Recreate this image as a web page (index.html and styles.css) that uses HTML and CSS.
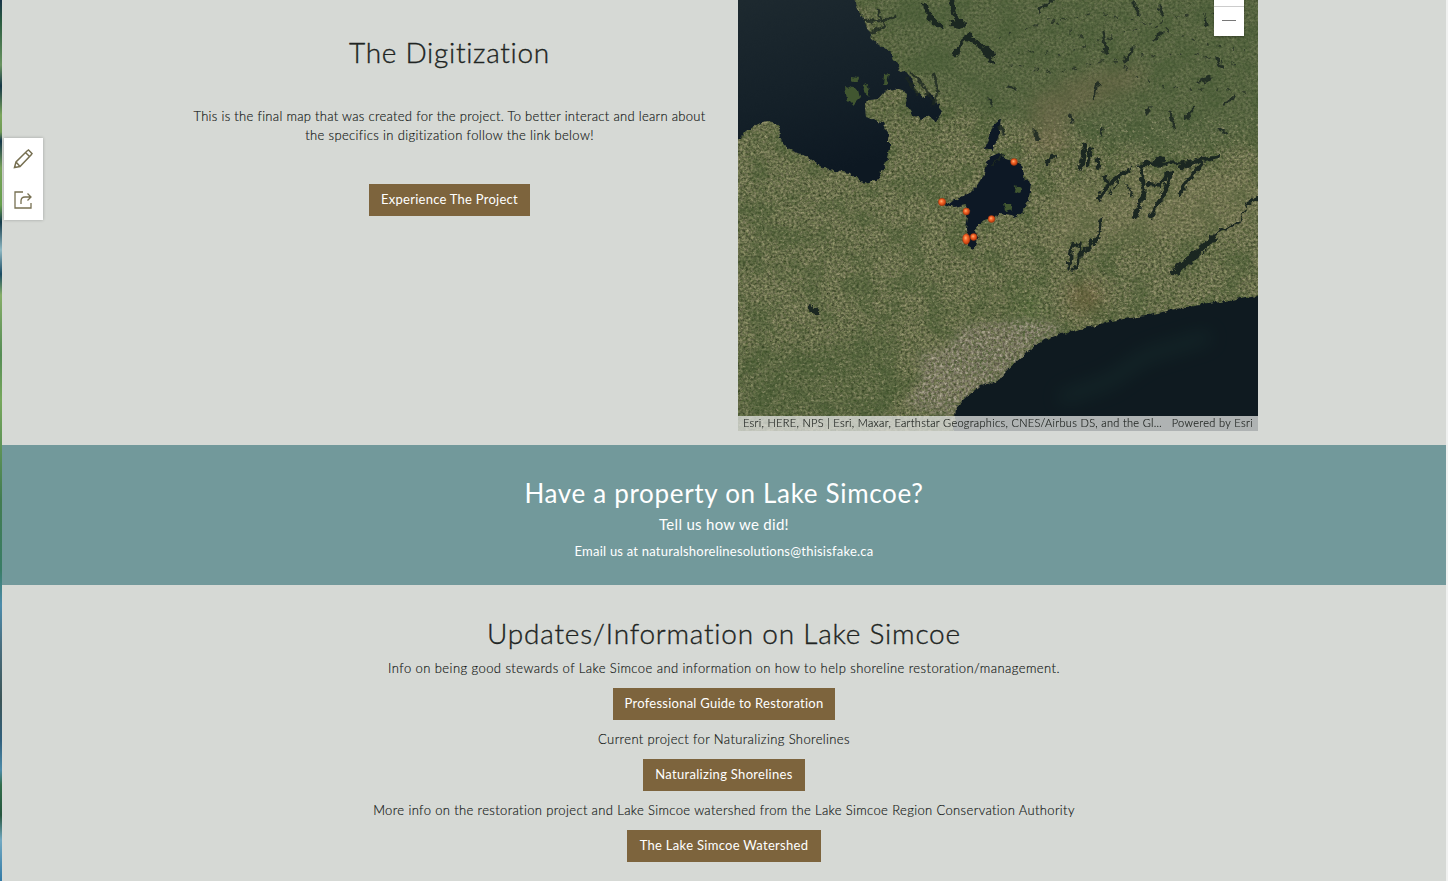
FILE: index.html
```html
<!DOCTYPE html>
<html lang="en">
<head>
<meta charset="utf-8">
<title>Lake Simcoe Natural Shorelines</title>
<link rel="stylesheet" href="styles.css">
</head>
<body>
<div class="page">
  <main class="content">
    <section class="digitization">
      <div class="intro">
        <h1 class="title intro-title">The Digitization</h1>
        <p class="copy intro-copy">This is the final map that was created for the project. To better interact and learn about<br><span class="second-line">the specifics in digitization follow the link below!</span></p>
        <a class="button project">Experience The Project</a>
      </div>
      <div class="map">
        <svg class="imagery" viewBox="738 0 520 431" width="520" height="431">
          <defs>
            <filter id="grain" x="0" y="0" width="100%" height="100%" color-interpolation-filters="sRGB">
              <feTurbulence type="fractalNoise" baseFrequency="0.37 0.41" numOctaves="3" seed="8"/>
              <feColorMatrix values=".5 .14 0 0 .085  .42 .18 0 0 .13  .4 .08 0 0 .05  0 0 0 0 1"/>
              <feGaussianBlur stdDeviation=".3"/>
            </filter>
            <filter id="patches" x="0" y="0" width="100%" height="100%" color-interpolation-filters="sRGB">
              <feTurbulence type="fractalNoise" baseFrequency="0.04" numOctaves="5" seed="21"/>
              <feColorMatrix values="0 0 0 0 .25  0 0 0 0 .34  0 0 0 0 .18  4 0 0 0 -1.75"/>
            </filter>
            <filter id="flecks" x="0" y="0" width="100%" height="100%" color-interpolation-filters="sRGB">
              <feTurbulence type="fractalNoise" baseFrequency="0.28 0.33" numOctaves="3" seed="4"/>
              <feColorMatrix values="0 0 0 0 .72  0 0 0 0 .69  0 0 0 0 .55  0 5 0 0 -3.05"/>
            </filter>
            <filter id="rough" x="-5%" y="-5%" width="110%" height="110%" color-interpolation-filters="sRGB">
              <feTurbulence type="fractalNoise" baseFrequency="0.16" numOctaves="3" seed="3"/>
              <feDisplacementMap in="SourceGraphic" scale="6" xChannelSelector="R" yChannelSelector="G"/>
              <feGaussianBlur stdDeviation=".4"/>
            </filter>
            <filter id="ragged" x="-5%" y="-5%" width="110%" height="110%" color-interpolation-filters="sRGB">
              <feTurbulence type="fractalNoise" baseFrequency="0.16" numOctaves="3" seed="13"/>
              <feDisplacementMap in="SourceGraphic" scale="8" xChannelSelector="R" yChannelSelector="G"/>
              <feGaussianBlur stdDeviation=".45"/>
            </filter>
            <filter id="soft" x="-30%" y="-30%" width="160%" height="160%" color-interpolation-filters="sRGB"><feGaussianBlur stdDeviation="9"/></filter>
            <filter id="city" x="-10%" y="-10%" width="120%" height="120%" color-interpolation-filters="sRGB">
              <feTurbulence type="fractalNoise" baseFrequency="0.35" numOctaves="3" seed="9" result="n"/>
              <feColorMatrix in="n" values=".65 0 0 0 .19  .63 0 0 0 .18  .6 0 0 0 .12  0 3 0 0 -.9" result="c"/>
              <feGaussianBlur in="SourceAlpha" stdDeviation="4" result="a"/>
              <feComposite in="c" in2="a" operator="in"/>
            </filter>
            <radialGradient id="dot" cx="42%" cy="40%" r="62%">
              <stop offset="0" stop-color="#ffb070"/><stop offset=".4" stop-color="#f5662a"/><stop offset="1" stop-color="#b93808"/>
            </radialGradient>
            <linearGradient id="bay" x1="0" y1="0" x2=".3" y2="1">
              <stop offset="0" stop-color="#1e2a30"/><stop offset=".55" stop-color="#152129"/><stop offset="1" stop-color="#0d1822"/>
            </linearGradient>
          </defs>
          <rect x="738" width="520" height="431" fill="#66704a"/>
          <rect x="738" width="520" height="431" filter="url(#grain)"/>
          <rect x="738" width="520" height="431" filter="url(#patches)" opacity=".4"/>
          <g filter="url(#soft)">
            <path d="M860-10H1270V130L1170 155 1040 130 940 100 890 50Z" fill="#485d39" opacity=".48"/>
            <path d="M1030 100 1080 75 1145 65 1140 85 1070 115 1065 160 1030 150Z" fill="#8b6f55" opacity=".28"/>
            <path d="M745 355 895 335 895 420 738 420Z" fill="#3e572e" opacity=".3"/>
            <path d="M1070 285H1100V310H1070Z" fill="#82603e" opacity=".4"/>
            <path d="M1020 290H1040V335H1020Z" fill="#42652c" opacity=".4"/>
            <path d="M1110 175 1258 170V230L1050 250 1050 195Z" fill="#8a855f" opacity=".25"/>
          </g>
          <rect class="field-flecks" x="738" y="118" width="520" height="313" filter="url(#flecks)"/>
          <path filter="url(#city)" d="M905 405 922 378 918 355 945 348 965 326 1000 322 1028 320 1054 324 1064 330 1035 345 1000 380 958 405 952 417Z"/>
          <g filter="url(#rough)">
            <path fill="url(#bay)" d="M730-8H850L860 12 867 27 873 40 887 50 894 59 901 72 911 74 915 90 923 97 930 93 938 103 942 112 936 121 929 115 921 119 912 114 906 106 907 94 899 88 885 91 878 99 869 100 865 106 866 117 884 124 889 136 889 150 885 165 879 177 869 184 858 180 850 173 835 171 820 166 808 157 795 152 785 146 780 138 779 124 766 122 757 124 747 131 736 142Z"/>
            <path fill="#0d1825" d="M986 162 992 156 999 153 1006 158 1013 161 1021 164 1024 180 1031 183 1029 199 1024 211 1015 217 1000 214 990 219 979 224 974 230 978 240 974 249 968 247 966 229 969 211 965 205 954 207 943 204 953 201 967 195 978 184 984 174ZM993 126 1001 119 998 138 992 151 986 148Z"/>
            <path fill="#0f1a20" d="M953 440 956 407 969 394 980 386 997 381 1006 371 1024 355 1040 342 1060 334 1089 327 1110 321 1145 316 1180 308 1215 303 1268 293V440Z"/>
          </g>
          <g filter="url(#rough)" fill="#415630">
            <path d="M845 85 852 88 859 89 861 97 853 105 847 99ZM852 76 859 77 857 83 851 81ZM865 85 870 89 867 95 863 92ZM884 75 889 74 887 83 883 85Z"/>
            <path d="M1015 186 1022 188 1019 193 1014 191ZM1004 203 1010 203 1013 210 1006 212Z"/>
          </g>
          <path filter="url(#soft)" fill="none" stroke="#1d3d38" stroke-width="12" opacity=".35" d="M1060 399 1110 381 1145 356 1210 336"/>
          <g filter="url(#ragged)" fill="none" stroke="#1b2721" stroke-linecap="round" stroke-linejoin="round">
            <path stroke-width="4.500" d="M925 4 931 19 940 27M951 0 954 15 963 26 952 23M955 54 962 41 971 35M971 40 981 46 992 62M984 48 993 55"/>
            <path opacity=".8" stroke-width="3" d="M866 20 881 22 894 17M872 32 885 27 879 12M910 72 919 80 926 91 934 100M934 75 938 91 933 105M908 79 917 94"/>
            <path opacity=".85" stroke-width="3.200" d="M1040 10 1053-2M1133 2 1140 15M1159 5 1163 15M1205 18 1207 27M1103 32 1106 52M1124 62 1133 48M1154 42 1161 33M1217 59 1222 68M1200 82 1210 78M1098 84 1094 99M1008 86 1015 90M1071 116 1073 120M1146 115 1150 108M1171 112 1174 128M1186 118 1194 108M1218 128 1226 133M1224 104 1234 97M1102 128 1101 136M989 98 991 104M1001 127 1003 133M1035 132 1038 139"/>
            <path stroke-width="4.200" d="M1085 145 1081 168M1091 149 1087 165M1098 159 1098 167M1047 163 1054 155M1098 199 1108 185 1129 169M1106 177 1107 190M1135 217 1144 195 1140 165 1164 159M1144 164 1188 163 1219 157M1171 173 1165 192 1150 216M1148 184 1160 185 1167 173M1203 163 1191 176 1180 193M1192 164 1181 168M1248 203 1257 199"/>
            <path stroke-width="1.400" d="M1240 220 1248 203M1110 195 1121 175M1132 195 1125 182"/>
            <path stroke-width="3.400" d="M1069 269 1072 246 1081 243 1080 257 1074 270M1082 254 1098 237 1102 220"/>
            <path stroke-width="7" d="M1176 271 1192 258 1205 246 1212 238"/>
            <path stroke-width="2" d="M1205 241 1222 230 1239 222M992 165 1002 155"/>
            <path stroke-width="6" d="M812 309 816 312"/>
            <path opacity=".65" stroke-width="1.700" stroke-dasharray="1 9 3 14" d="M1000 38 1040 24 1095 12 1155 26 1200 42 1245 51M1010 64 1055 73 1130 55 1195 54 1240 65M1048 18 1090 42 1140 79 1165 87 1245 92M1020 52 1060 54 1120 34 1180 15 1250 12"/>
          </g>
          <g class="markers">
            <circle cx="1014" cy="162" r="3.400"/><circle cx="942" cy="202" r="3.700"/><circle cx="966.300" cy="211.500" r="3.400"/><circle cx="991.500" cy="219" r="3.400"/><ellipse cx="966.300" cy="239" rx="3.700" ry="5.300"/><circle cx="973.600" cy="237" r="3.400"/>
          </g>
        </svg>
        <div class="zoom-control"><span class="minus"></span></div>
        <div class="attribution"><span class="sources">Esri, HERE, NPS | Esri, Maxar, Earthstar Geographics, CNES/Airbus DS, and the Gl…</span><span class="powered">Powered by Esri</span></div>
      </div>
    </section>
    <section class="contact">
      <h2 class="contact-title">Have a property on Lake Simcoe?</h2>
      <p class="contact-lead">Tell us how we did!</p>
      <p class="contact-mail">Email us at naturalshorelinesolutions@thisisfake.ca</p>
    </section>
    <section class="updates">
      <h2 class="title updates-title">Updates/Information on Lake Simcoe</h2>
      <p class="copy info">Info on being good stewards of Lake Simcoe and information on how to help shoreline restoration/management.</p>
      <a class="button guide">Professional Guide to Restoration</a>
      <p class="copy current">Current project for Naturalizing Shorelines</p>
      <a class="button natural">Naturalizing Shorelines</a>
      <p class="copy more">More info on the restoration project and Lake Simcoe watershed from the Lake Simcoe Region Conservation Authority</p>
      <a class="button watershed">The Lake Simcoe Watershed</a>
    </section>
  </main>
  <aside class="tools">
    <svg class="tool" viewBox="0 0 22 22"><path d="M2.500 19.500 4 14 15 3 16.500 2 20 5.500 19 7 8 18.500ZM4 14 8 18.500M13.500 4.500 18 9"/></svg>
    <svg class="tool share" viewBox="0 0 22 22"><path d="M11 3H3V19H19V14M9 15V12Q9 8 13 8H19M15.500 4.500 19 8 15.500 11.500"/></svg>
  </aside>
</div>
</body>
</html>
```
FILE: styles.css
```css
* { box-sizing: border-box; }

body {
  margin: 0;
  overflow: hidden;
  font-family: Lato, "Open Sans", sans-serif;
  font-weight: 300;
  font-variant-ligatures: none;
  color: #202422;
}

h1, h2, p { margin: 0; font-weight: inherit; white-space: nowrap; }

.page {
  position: relative;
  height: 881px;
  padding: 0 2px;
  background: linear-gradient(#183449 0, #295a40 20px, #699460 65px, #163747 86px, #7ba65c 115px, #709b55 132px, #14364a 141px, #78a35a 168px, #66a04d 205px, #153b4b 222px, #8fb9c4 250px, #1a4b63 274px, #86ae68 295px, #568d55 355px, #77a85c 400px, #427c50 500px, #397d66 570px, #4c8cac 605px, #496f80 645px, #3c5557 700px, #31607d 740px, #4d8caa 770px, #326e4b 785px, #27563e 815px, #72a9c2 840px, #327aa6 881px) left / 2px 100% no-repeat, #f0f1f0;
}

.content { height: 881px; background: #d6d9d5; }

.digitization {
  display: grid;
  grid-template-columns: 520px 520px;
  column-gap: 28px;
  height: 445px;
  padding-left: 188px;
}

.intro, .contact, .updates { display: flex; flex-direction: column; align-items: center; }
.intro { padding-right: 1px; }

.title { font-size: 28px; line-height: 36px; letter-spacing: .78px; -webkit-text-stroke: .35px #202422; }
.intro-title { margin-top: 34px; letter-spacing: .7px; }
.copy { font-size: 13px; line-height: 19px; letter-spacing: .43px; color: #111513; text-align: center; -webkit-text-stroke: .15px #111513; }
.intro-copy { margin-top: 37px; letter-spacing: .3px; }
.second-line { letter-spacing: .36px; }

.button {
  display: flex;
  align-items: center;
  justify-content: center;
  height: 32px;
  padding-bottom: 1px;
  background: #7d643d;
  color: #fff;
  font-size: 13px;
  font-weight: 400;
  line-height: 19px;
  letter-spacing: .25px;
  white-space: nowrap;
}
.project { width: 161px; margin-top: 39px; }
.guide { width: 222px; }
.natural { width: 162px; letter-spacing: .3px; }
.watershed { width: 194px; letter-spacing: .3px; }

.map { position: relative; height: 431px; overflow: hidden; }
.imagery { display: block; }
.field-flecks { opacity: .45; }
.markers { fill: url(#dot); stroke: #9a3411; stroke-width: .5px; }

.zoom-control {
  position: absolute;
  top: 0;
  right: 14px;
  width: 30px;
  height: 36px;
  padding-top: 6px;
  background: linear-gradient(#fff 6px, #ccc 6px, #ccc 7px, #fff 7px);
  box-shadow: 0 1px 2px rgba(0, 0, 0, .3);
}
.minus { display: block; width: 14px; height: 1px; margin: 14px auto 0; background: #777; }

.attribution {
  position: absolute;
  left: 0;
  right: 0;
  bottom: 0;
  display: flex;
  justify-content: space-between;
  height: 15px;
  padding: 0 5px;
  background: rgba(226, 227, 226, .76);
  color: #1c201d;
  font-size: 11px;
  line-height: 14px;
  white-space: nowrap;
  -webkit-text-stroke: .15px #1c201d;
}
.sources { letter-spacing: .3px; }
.powered { letter-spacing: .35px; }

.contact { height: 140px; padding-top: 31px; background: #72999b; color: #fff; font-weight: 400; }
.contact-title { font-size: 26px; line-height: 34px; letter-spacing: .68px; }
.contact-lead { font-size: 15px; line-height: 22px; margin-top: 3px; letter-spacing: .3px; }
.contact-mail { font-size: 13px; line-height: 19px; margin-top: 7px; letter-spacing: .22px; }

.updates { padding-top: 30px; }
.info { margin-top: 8px; margin-bottom: 10px; }
.current, .more { margin: 10px 0; }
.current { letter-spacing: .38px; }
.more { letter-spacing: .37px; }

.tools {
  position: absolute;
  left: 4px;
  top: 138px;
  display: flex;
  flex-direction: column;
  align-items: center;
  gap: 19px;
  width: 39px;
  height: 82px;
  padding: 10px 2px 0 0;
  background: #fff;
  box-shadow: 0 0 3px rgba(0, 0, 0, .25);
}
.tool { width: 22px; height: 22px; fill: none; stroke: #777052; stroke-width: 1.5; }
.share { stroke-width: 1.3; }
```
